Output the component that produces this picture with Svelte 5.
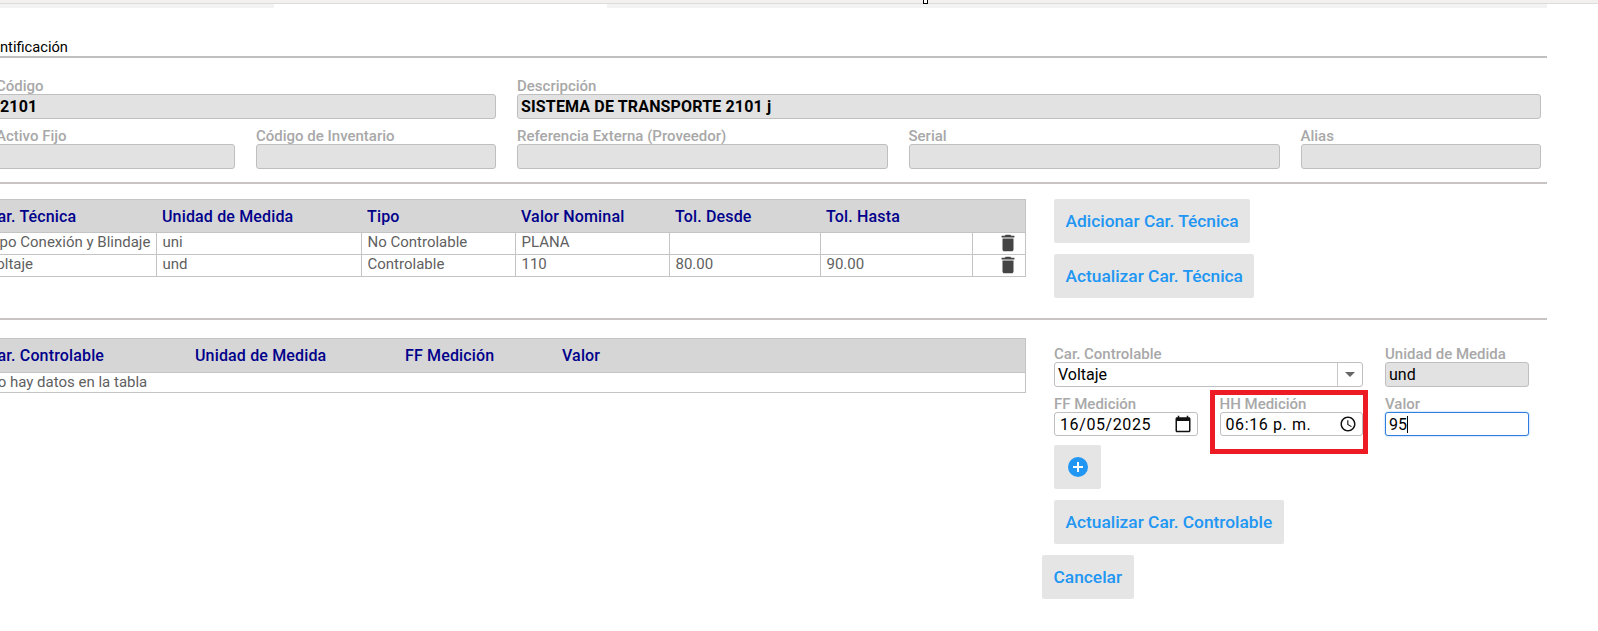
<script>
	const tecnicas = [
		{ nombre: 'Tipo Conexión y Blindaje', unidad: 'uni', tipo: 'No Controlable', valor: 'PLANA', desde: '', hasta: '' },
		{ nombre: 'Voltaje', unidad: 'und', tipo: 'Controlable', valor: '110', desde: '80.00', hasta: '90.00' }
	];
</script>

{#snippet trash()}
	<svg class="trash" viewBox="0 0 24 24" width="22" height="22" fill="#444">
		<path d="M6 19c0 1.1.9 2 2 2h8c1.1 0 2-.9 2-2V7H6v12zM19 4h-3.5l-1-1h-5l-1 1H5v2h14V4z" />
	</svg>
{/snippet}

<div class="page">
	<div class="topbar"><span class="marker"></span></div>
	<div class="tabs">
		<div class="tab off first"></div>
		<div class="tab on"></div>
		<div class="tab off last"></div>
	</div>

	<div class="content">
		<h3 class="section-title">Identificación</h3>

		<div class="idgrid">
			<div class="field span2">
				<label for="codigo">Código</label>
				<input id="codigo" class="ro strong" value="2101" readonly />
			</div>
			<div class="field span3">
				<label for="desc">Descripción</label>
				<input id="desc" class="ro strong" value="SISTEMA DE TRANSPORTE 2101 j" readonly />
			</div>
			<div class="field">
				<label for="activo">Activo Fijo</label>
				<input id="activo" class="ro" readonly />
			</div>
			<div class="field">
				<label for="inv">Código de Inventario</label>
				<input id="inv" class="ro" readonly />
			</div>
			<div class="field">
				<label for="ref">Referencia Externa (Proveedor)</label>
				<input id="ref" class="ro" readonly />
			</div>
			<div class="field">
				<label for="serial">Serial</label>
				<input id="serial" class="ro" readonly />
			</div>
			<div class="field">
				<label for="alias">Alias</label>
				<input id="alias" class="ro" readonly />
			</div>
		</div>

		<div class="block block-tec">
			<table class="data tec">
				<thead>
					<tr>
						<th>Car. Técnica</th>
						<th>Unidad de Medida</th>
						<th>Tipo</th>
						<th>Valor Nominal</th>
						<th>Tol. Desde</th>
						<th>Tol. Hasta</th>
						<th></th>
					</tr>
				</thead>
				<tbody>
					{#each tecnicas as t}
						<tr>
							<td>{t.nombre}</td>
							<td>{t.unidad}</td>
							<td>{t.tipo}</td>
							<td>{t.valor}</td>
							<td>{t.desde}</td>
							<td>{t.hasta}</td>
							<td class="icon-cell">{@render trash()}</td>
						</tr>
					{/each}
				</tbody>
			</table>
			<div class="actions">
				<button>Adicionar Car. Técnica</button>
				<button>Actualizar Car. Técnica</button>
			</div>
		</div>

		<div class="block block-ctrl">
			<table class="data ctrl">
				<thead>
					<tr>
						<th>Car. Controlable</th>
						<th>Unidad de Medida</th>
						<th>FF Medición</th>
						<th>Valor</th>
					</tr>
				</thead>
				<tbody>
					<tr><td colspan="4">No hay datos en la tabla</td></tr>
				</tbody>
			</table>

			<div class="side">
				<div class="side-form">
					<div class="field wide">
						<span class="lbl">Car. Controlable</span>
						<div class="box select">
							<span class="select-val">Voltaje</span>
							<span class="select-btn"><i class="caret"></i></span>
						</div>
					</div>
					<div class="field">
						<span class="lbl">Unidad de Medida</span>
						<div class="box ro-box">und</div>
					</div>
					<div class="field">
						<span class="lbl">FF Medición</span>
						<div class="box dt">
							<span>16/05/2025</span>
							<svg viewBox="0 0 24 24" width="18" height="18" fill="#111">
								<path d="M20 3h-1V1h-2v2H7V1H5v2H4c-1.1 0-2 .9-2 2v16c0 1.1.9 2 2 2h16c1.1 0 2-.9 2-2V5c0-1.1-.9-2-2-2zm0 18H4V8h16v13z" />
							</svg>
						</div>
					</div>
					<div class="field hh">
						<span class="lbl">HH Medición</span>
						<div class="box dt">
							<span>06:16 p. m.</span>
							<svg viewBox="0 0 24 24" width="18" height="18" fill="#111">
								<path d="M11.99 2C6.47 2 2 6.48 2 12s4.47 10 9.99 10C17.52 22 22 17.52 22 12S17.52 2 11.99 2zM12 20c-4.42 0-8-3.58-8-8s3.58-8 8-8 8 3.58 8 8-3.58 8-8 8zm.5-13H11v6l5.25 3.15.75-1.23-4.5-2.67V7z" />
							</svg>
						</div>
						<div class="highlight"></div>
					</div>
					<div class="field">
						<span class="lbl">Valor</span>
						<div class="box focus">95<i class="text-caret"></i></div>
					</div>
				</div>

				<div class="actions">
					<button class="add" aria-label="Adicionar">
						<svg viewBox="0 0 20 20" width="20" height="20">
							<circle cx="10" cy="10" r="10" fill="#2196f3" />
							<path d="M10 5v10M5 10h10" stroke="#fff" stroke-width="2" />
						</svg>
					</button>
					<button>Actualizar Car. Controlable</button>
				</div>
				<button class="cancel">Cancelar</button>
			</div>
		</div>
	</div>
</div>

<style>
	:global(body) {
		margin: 0;
		background: #fff;
		font-family: Roboto, "Liberation Sans", sans-serif;
	}

	.page {
		width: 1598px;
		height: 631px;
		overflow: hidden;
		position: relative;
	}

	.topbar {
		height: 3px;
		background: #f5f0f0;
		border-bottom: 1px solid #dcdcdc;
		position: relative;
	}

	.marker {
		position: absolute;
		left: 923px;
		top: 0;
		width: 5px;
		height: 4px;
		border: 1px solid #000;
		border-top: none;
		box-sizing: border-box;
		background: #fff;
	}

	.tabs {
		display: flex;
		height: 4px;
	}
	.tab.first {
		width: 274px;
	}
	.tab.on {
		width: 333px;
		background: #fff;
	}
	.tab.last {
		width: 940px;
	}
	.tab.off {
		background: #f3f3f3;
	}

	.content {
		margin-left: -20px;
		width: 1567px;
	}

	.section-title {
		margin: 0;
		padding: 31px 0 1px 0;
		height: 16px;
		box-sizing: content-box;
		font-size: 14.67px;
		line-height: 16px;
		font-weight: 400;
		color: #000;
		border-bottom: 2px solid #bfbfbf;
	}

	.idgrid {
		display: grid;
		grid-template-columns: 239px 240px 370.5px 371px 240px;
		column-gap: 21px;
		row-gap: 9px;
		margin-left: 16px;
		padding: 20px 0 13px;
		width: 1551px;
	}

	.span2 {
		grid-column: span 2;
	}
	.span3 {
		grid-column: span 3;
	}

	.field {
		display: flex;
		flex-direction: column;
		position: relative;
	}

	.field label,
	.lbl {
		font-size: 15px;
		line-height: 16px;
		font-weight: 500;
		color: #a8a8a8;
		height: 16px;
		white-space: nowrap;
	}

	input {
		font-family: inherit;
		box-sizing: border-box;
		outline: none;
		width: 100%;
	}

	.ro {
		height: 25px;
		margin-top: 0;
		background: #e2e2e2;
		border: 1px solid #bfbfbf;
		border-radius: 3px;
		padding: 0 3px;
		font-size: 16px;
		color: #000;
	}

	.strong {
		font-weight: 700;
		letter-spacing: 0.15px;
	}

	.block {
		display: flex;
		align-items: flex-start;
		border-top: 2px solid #c8c4c4;
	}

	.block-tec {
		height: 136px;
		padding-top: 15px;
		box-sizing: border-box;
	}

	.block-ctrl {
		padding-top: 18px;
	}

	.data {
		border-collapse: collapse;
		table-layout: fixed;
		width: 1046px;
		border: 1px solid #c4c4c4;
		font-size: 15px;
		color: #5f5f5f;
		flex: none;
	}

	.data th {
		background: #d6d6d6;
		color: #00008b;
		font-weight: 500;
		font-size: 16px;
		letter-spacing: 0.15px;
		text-align: left;
		padding: 0 6px;
	}

	.tec th {
		height: 32px;
	}
	.ctrl th {
		height: 33px;
	}

	.data td {
		padding: 0 6px;
		line-height: 18px;
		vertical-align: top;
		border-top: 1px solid #c4c4c4;
	}
	.tec td {
		height: 21px;
		border: 1px solid #c4c4c4;
		overflow: hidden;
		white-space: nowrap;
	}
	.ctrl td {
		height: 20px;
		box-sizing: border-box;
	}

	.tec th:nth-child(1) { width: 163px; }
	.tec th:nth-child(2) { width: 193px; }
	.tec th:nth-child(3) { width: 142px; }
	.tec th:nth-child(4) { width: 142px; }
	.tec th:nth-child(5) { width: 139px; }
	.tec th:nth-child(6) { width: 140px; }

	.ctrl th:nth-child(1) { width: 196px; }
	.ctrl th:nth-child(2) { width: 198px; }
	.ctrl th:nth-child(3) { width: 145px; }

	.icon-cell {
		position: relative;
		padding: 0 !important;
		text-align: right;
	}
	.trash {
		display: block;
		margin: -1px 6px 0 auto;
	}

	.actions {
		display: flex;
		flex-direction: column;
		align-items: flex-start;
		gap: 11px;
		margin-left: 28px;
	}

	button {
		height: 44px;
		padding: 0 11.5px;
		border: none;
		border-radius: 2px;
		background: #e5e5e5;
		color: #2196f3;
		font-family: inherit;
		font-size: 17.33px;
		font-weight: 500;
	}

	.add {
		width: 47px;
		padding: 0;
		display: flex;
		align-items: center;
		justify-content: center;
	}

	.side {
		display: flex;
		flex-direction: column;
		align-items: flex-start;
		margin-top: 8px;
	}

	.side-form {
		display: grid;
		grid-template-columns: 143.5px 143.5px 144px;
		column-gap: 22px;
		row-gap: 9px;
		margin-left: 28px;
		margin-bottom: 9px;
	}

	.wide {
		grid-column: span 2;
	}

	.box {
		box-sizing: border-box;
		height: 25px;
		border: 1px solid #bfbfbf;
		border-radius: 3px;
		font-size: 16px;
		color: #000;
		display: flex;
		align-items: center;
		padding: 0 3px;
		background: #fff;
	}

	.select {
		padding: 0;
		width: 309px;
	}
	.select-val {
		flex: 1;
		padding-left: 3px;
	}
	.select-btn {
		width: 24px;
		height: 100%;
		border-left: 1px solid #c8c8c8;
		display: flex;
		align-items: center;
		justify-content: center;
	}
	.caret {
		width: 0;
		height: 0;
		border-left: 5px solid transparent;
		border-right: 5px solid transparent;
		border-top: 5px solid #666;
	}

	.ro-box {
		background: #e2e2e2;
	}

	.dt {
		height: 24px;
		justify-content: space-between;
		padding: 0 5px;
		letter-spacing: 0.6px;
	}
	.dt svg {
		flex: none;
	}

	.focus {
		height: 24px;
		border-color: #2f7fe0;
		box-shadow: 0 0 2px #8ab8f0;
	}
	.text-caret {
		display: inline-block;
		width: 1px;
		height: 17px;
		background: #000;
	}

	.highlight {
		position: absolute;
		left: -10px;
		top: -6px;
		width: 158px;
		height: 64px;
		box-sizing: border-box;
		border: 5px solid #ed1c24;
		pointer-events: none;
	}

	.cancel {
		margin: 11px 0 0 16px;
	}
</style>
